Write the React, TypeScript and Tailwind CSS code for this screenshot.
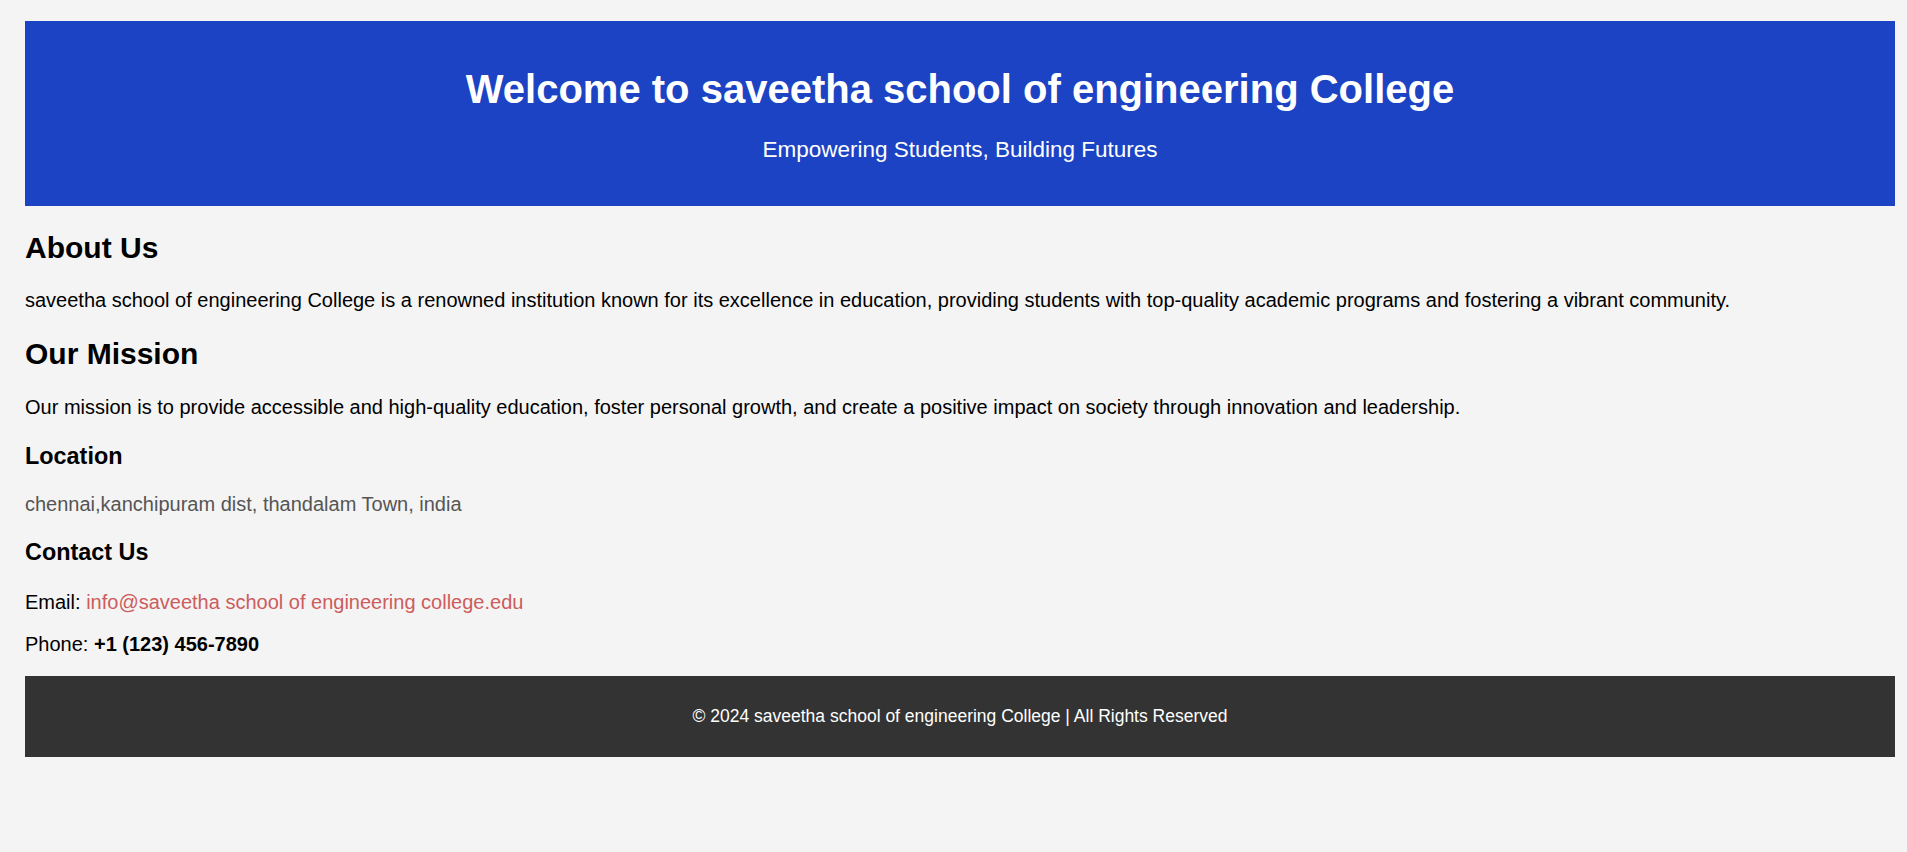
import React from "react";

const font = { fontFamily: '"Liberation Sans", Arial, sans-serif' };

export default function App() {
  return (
    <div
      className="min-h-screen bg-[#f4f4f4] pt-[21px] pl-[25px] pr-[12px] text-black"
      style={font}
    >
      <header className="bg-[#1c43c3] pt-[45px] pb-[43px] text-center text-white">
        <h1 className="text-[40px] font-bold leading-[46px]">
          Welcome to saveetha school of engineering College
        </h1>
        <p className="mt-[25px] text-[22.5px] leading-[26px]">
          Empowering Students, Building Futures
        </p>
      </header>

      <section>
        <h2 className="mt-[25px] text-[30px] font-bold leading-[34px]">About Us</h2>
        <p className="mt-[24px] text-[20px] leading-[23px]">
          saveetha school of engineering College is a renowned institution known for its
          excellence in education, providing students with top-quality academic programs and
          fostering a vibrant community.
        </p>
      </section>

      <section>
        <h2 className="mt-[25px] text-[30px] font-bold leading-[34px]">Our Mission</h2>
        <p className="mt-[25px] text-[20px] leading-[23px]">
          Our mission is to provide accessible and high-quality education, foster personal
          growth, and create a positive impact on society through innovation and leadership.
        </p>
      </section>

      <section>
        <h3 className="mt-[24px] text-[23.4px] font-bold leading-[27px]">Location</h3>
        <p className="mt-[23px] text-[20px] leading-[23px] text-[#555555]">
          chennai,kanchipuram dist, thandalam Town, india
        </p>
      </section>

      <section>
        <h3 className="mt-[23px] text-[23.4px] font-bold leading-[27px]">Contact Us</h3>
        <p className="mt-[25px] text-[20px] leading-[23px]">
          Email:{" "}
          <a href="#" className="text-[#cd5c5c]">
            info@saveetha school of engineering college.edu
          </a>
        </p>
        <p className="mt-[19px] text-[20px] leading-[23px]">
          Phone: <strong className="font-bold">+1 (123) 456-7890</strong>
        </p>
      </section>

      <footer className="mt-[20px] flex h-[81px] items-center justify-center bg-[#333333] text-[17.5px] text-white">
        © 2024 saveetha school of engineering College | All Rights Reserved
      </footer>
    </div>
  );
}
